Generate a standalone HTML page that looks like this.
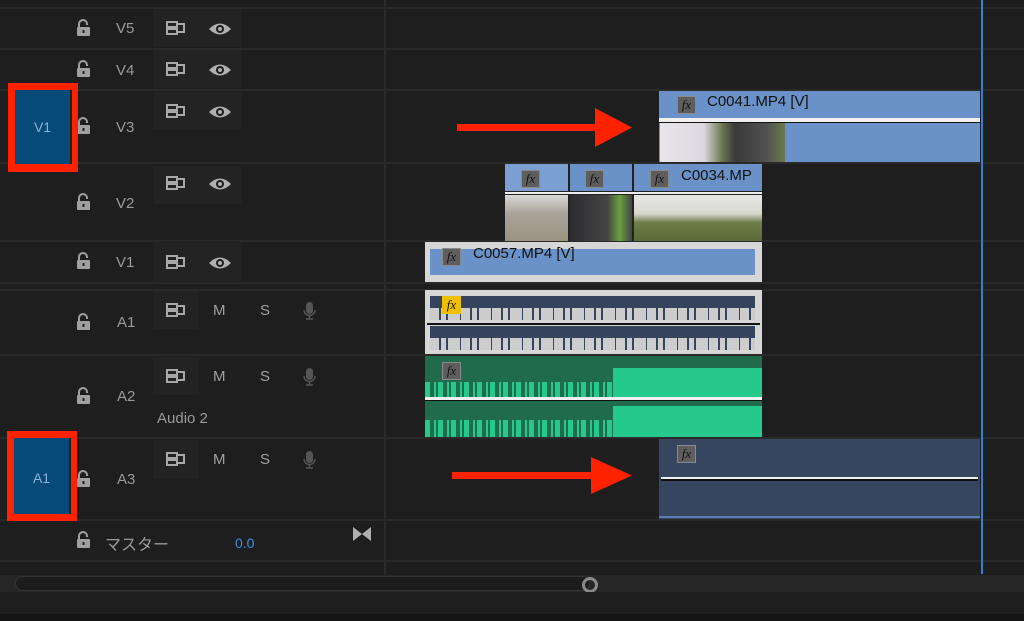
<!DOCTYPE html>
<html><head><meta charset="utf-8"><style>
body{margin:0;width:1024px;height:621px;background:#1e1e1e;position:relative;overflow:hidden;font-family:"Liberation Sans","Noto Sans CJK JP",sans-serif;}
.a{position:absolute;}
.hl{position:absolute;left:0;width:1024px;height:2px;background:#2a2a2a;}
.lbl{position:absolute;color:#9a9a9a;font-size:15px;}
.tb{position:absolute;width:88px;height:38px;background:#232323;}
.fx{position:absolute;width:17px;height:16px;background:#5e5e5e;border:1px solid #8a8a8a;color:#111;font-style:italic;font-size:13px;line-height:15px;text-align:center;font-family:"Liberation Serif",serif;}
.ms{position:absolute;color:#a0a0a0;font-size:15px;}
</style></head><body>
<div class="a" style="left:384px;top:0;width:2px;height:575px;background:#2a2a2a"></div>
<div class="hl" style="top:7px"></div><div class="hl" style="top:48px"></div><div class="hl" style="top:89px"></div>
<div class="hl" style="top:162px"></div><div class="hl" style="top:240px"></div><div class="hl" style="top:282px"></div>
<div class="hl" style="top:289px"></div><div class="hl" style="top:354px"></div><div class="hl" style="top:437px"></div>
<div class="hl" style="top:519px"></div><div class="hl" style="top:560px"></div>
<div class="tb" style="left:153px;top:9px"></div><div class="tb" style="left:153px;top:50px"></div>
<div class="tb" style="left:153px;top:92px;height:38px"></div><div class="tb" style="left:153px;top:166px"></div>
<div class="tb" style="left:153px;top:243px"></div>
<div class="tb" style="left:153px;top:291px;width:46px"></div><div class="tb" style="left:153px;top:357px;width:46px"></div><div class="tb" style="left:153px;top:440px;width:46px"></div>
<svg class="a" style="left:0;top:0" width="400" height="621">
<defs><g id="s"><rect x="1" y="1" width="10" height="5" fill="none" stroke="#a8a8a8" stroke-width="2"/><rect x="1" y="8" width="10" height="5" fill="none" stroke="#a8a8a8" stroke-width="2"/><rect x="11" y="3" width="7" height="8" fill="none" stroke="#a8a8a8" stroke-width="2"/></g>
<g id="e"><path d="M0 7 Q11 -4 22 7 Q11 18 0 7Z" fill="#b0b0b0"/><circle cx="11" cy="7" r="4" fill="#1e1e1e"/><circle cx="11" cy="7" r="2" fill="#b0b0b0"/></g>
<g id="l"><path d="M2 7 V4 A4 4 0 0 1 10 4 V5" fill="none" stroke="#a0a0a0" stroke-width="2"/><rect x="0" y="7" width="13" height="9" rx="1" fill="#a0a0a0"/><rect x="5.5" y="10" width="2" height="3" fill="#222"/></g>
<g id="m"><rect x="3" y="0" width="7" height="12" rx="3.5" fill="#555"/><path d="M1 8 A5.5 5.5 0 0 0 12 8 M6.5 14 V17 M3 17 H10" fill="none" stroke="#555" stroke-width="1.5"/></g></defs>
<use href="#s" x="166" y="21"/><use href="#e" x="209" y="22"/>
<use href="#s" x="166" y="62"/><use href="#e" x="209" y="63"/>
<use href="#s" x="166" y="104"/><use href="#e" x="209" y="105"/>
<use href="#s" x="166" y="176"/><use href="#e" x="209" y="177"/>
<use href="#s" x="166" y="255"/><use href="#e" x="209" y="256"/>
<use href="#s" x="166" y="303"/><use href="#s" x="166" y="369"/><use href="#s" x="166" y="452"/>
<use href="#l" x="77" y="20"/><use href="#l" x="77" y="61"/><use href="#l" x="77" y="118"/><use href="#l" x="77" y="194"/>
<use href="#l" x="77" y="253"/><use href="#l" x="77" y="314"/><use href="#l" x="77" y="388"/><use href="#l" x="77" y="471"/><use href="#l" x="77" y="532"/>
<use href="#m" x="303" y="302"/><use href="#m" x="303" y="368"/><use href="#m" x="303" y="451"/>
<path d="M353 527 L362 534 L353 541Z M371 527 L362 534 L371 541Z" fill="#b0b0b0"/>
</svg>
<div class="lbl" style="left:116px;top:20px">V5</div>
<div class="lbl" style="left:116px;top:62px">V4</div>
<div class="lbl" style="left:116px;top:119px">V3</div>
<div class="lbl" style="left:116px;top:195px">V2</div>
<div class="lbl" style="left:116px;top:254px">V1</div>
<div class="lbl" style="left:117px;top:314px">A1</div>
<div class="lbl" style="left:117px;top:388px">A2</div>
<div class="lbl" style="left:117px;top:471px">A3</div>
<div class="lbl" style="left:105px;top:531px;font-size:16px">マスター</div>
<div class="lbl" style="left:157px;top:410px">Audio 2</div>
<div class="a" style="left:235px;top:535px;color:#3d8ee0;font-size:14px">0.0</div>
<div class="ms" style="left:213px;top:302px">M</div><div class="ms" style="left:260px;top:302px">S</div>
<div class="ms" style="left:213px;top:368px">M</div><div class="ms" style="left:260px;top:368px">S</div>
<div class="ms" style="left:213px;top:451px">M</div><div class="ms" style="left:260px;top:451px">S</div>
<div class="a" style="left:8px;top:83px;width:70px;height:89px;background:#ff2200"></div>
<div class="a" style="left:15px;top:90px;width:55px;height:74px;background:#064a79;border-right:2px solid #222;color:#8ab4d8;font-size:14px;text-align:center;line-height:74px">V1</div>
<div class="a" style="left:7px;top:431px;width:70px;height:90px;background:#ff2200"></div>
<div class="a" style="left:14px;top:438px;width:55px;height:76px;background:#064a79;border-right:2px solid #222;color:#8ab4d8;font-size:14px;text-align:center;line-height:80px">A1</div>
<div class="a" style="left:659px;top:91px;width:321px;height:71px;background:#6a92c8"></div>
<div class="a" style="left:659px;top:118px;width:321px;height:4px;background:#f0f0f0;border-bottom:1px solid #111"></div>
<div class="a" style="left:660px;top:123px;width:125px;height:39px;background:linear-gradient(90deg,#e8e6ea 0,#dcd8e0 35%,#6b7450 50%,#3a3a3a 60%,#505050 85%,#6b7a4a 100%)"></div>
<div class="fx" style="left:677px;top:96px">fx</div>
<div class="a" style="left:707px;top:93px;color:#111;font-size:15px">C0041.MP4 [V]</div>
<div class="a" style="left:505px;top:164px;width:257px;height:77px;background:#222"></div>
<div class="a" style="left:505px;top:164px;width:63px;height:27px;background:#7b9fd0"></div>
<div class="a" style="left:570px;top:164px;width:62px;height:27px;background:#6a92c8"></div>
<div class="a" style="left:634px;top:164px;width:128px;height:27px;background:#6a92c8"></div>
<div class="a" style="left:505px;top:192px;width:257px;height:2px;background:#eee"></div>
<div class="a" style="left:505px;top:195px;width:63px;height:46px;background:linear-gradient(180deg,#d8d8d8 0,#aaa39a 40%,#9c9282 100%)"></div>
<div class="a" style="left:570px;top:195px;width:62px;height:46px;background:linear-gradient(90deg,#2c2c30 0,#444 60%,#6aa040 80%,#444 100%)"></div>
<div class="a" style="left:634px;top:195px;width:128px;height:46px;background:linear-gradient(180deg,#e6e6e6 0,#d8d8d0 40%,#6d7e48 60%,#5a6a3a 100%)"></div>
<div class="fx" style="left:521px;top:170px">fx</div><div class="fx" style="left:585px;top:170px">fx</div><div class="fx" style="left:650px;top:170px">fx</div>
<div class="a" style="left:681px;top:167px;color:#111;font-size:15px">C0034.MP</div>
<div class="a" style="left:425px;top:242px;width:337px;height:40px;background:#d6d6d6"></div>
<div class="a" style="left:430px;top:249px;width:325px;height:26px;background:#6a92c8"></div>
<div class="fx" style="left:442px;top:248px">fx</div>
<div class="a" style="left:473px;top:245px;color:#111;font-size:15px">C0057.MP4 [V]</div>
<div class="a" style="left:425px;top:290px;width:337px;height:64px;background:#d6d6d6"></div>
<div class="a" style="left:430px;top:296px;width:325px;height:22px;background:#35445c"></div>
<div class="a" style="left:430px;top:308px;width:325px;height:12px;background:repeating-linear-gradient(90deg,#ccc 0 9px,#35445c 9px 11px,#ccc 11px 16px,#35445c 16px 18px,#ccc 18px 30px,#35445c 30px 31px)"></div>
<div class="a" style="left:427px;top:323px;width:333px;height:2px;background:#111"></div>
<div class="a" style="left:430px;top:326px;width:325px;height:24px;background:#35445c"></div>
<div class="a" style="left:430px;top:338px;width:325px;height:12px;background:repeating-linear-gradient(90deg,#ccc 0 9px,#35445c 9px 11px,#ccc 11px 16px,#35445c 16px 18px,#ccc 18px 30px,#35445c 30px 31px)"></div>
<div class="fx" style="left:442px;top:296px;background:#f0c000;border-color:#f0c000">fx</div>
<div class="a" style="left:425px;top:356px;width:337px;height:81px;background:#1f6b4c"></div>
<div class="a" style="left:425px;top:382px;width:188px;height:15px;background:repeating-linear-gradient(90deg,#25c98c 0 5px,#1f6b4c 5px 9px,#25c98c 9px 11px,#1f6b4c 11px 13px)"></div>
<div class="a" style="left:613px;top:368px;width:149px;height:29px;background:#25c98c"></div>
<div class="a" style="left:425px;top:397px;width:337px;height:3px;background:#f0f0f0;border-bottom:1px solid #111"></div>
<div class="a" style="left:425px;top:420px;width:188px;height:17px;background:repeating-linear-gradient(90deg,#25c98c 0 5px,#1f6b4c 5px 9px,#25c98c 9px 11px,#1f6b4c 11px 13px)"></div>
<div class="a" style="left:613px;top:406px;width:149px;height:31px;background:#25c98c"></div>
<div class="fx" style="left:442px;top:362px">fx</div>
<div class="a" style="left:659px;top:439px;width:321px;height:80px;background:#35465e"></div>
<div class="a" style="left:661px;top:477px;width:317px;height:2px;background:#f0f0f0;border-bottom:2px solid #111"></div>
<div class="a" style="left:659px;top:516px;width:321px;height:2px;background:#5a7db8"></div>
<div class="fx" style="left:677px;top:445px">fx</div>
<div class="a" style="left:981px;top:0;width:2px;height:574px;background:#2e7fd8"></div>
<svg class="a" style="left:440px;top:100px" width="200" height="400">
<rect x="17" y="24" width="140" height="7" fill="#ff2200"/><path d="M155 8 L192 27.5 L155 47Z" fill="#ff2200"/>
<rect x="12" y="372" width="145" height="7" fill="#ff2200"/><path d="M151 357 L192 375.5 L151 394Z" fill="#ff2200"/>
</svg>
<div class="a" style="left:0;top:575px;width:1024px;height:17px;background:#262626"></div>
<div class="a" style="left:15px;top:576px;width:575px;height:15px;border:1px solid #333;border-radius:8px;background:#1c1c1c;box-sizing:border-box"></div>
<div class="a" style="left:582px;top:577px;width:10px;height:10px;border:3px solid #8a8a8a;border-radius:50%"></div>
<div class="a" style="left:0;top:592px;width:1024px;height:22px;background:#1e1e1e"></div>
<div class="a" style="left:0;top:614px;width:1024px;height:7px;background:#141414"></div>
</body></html>
